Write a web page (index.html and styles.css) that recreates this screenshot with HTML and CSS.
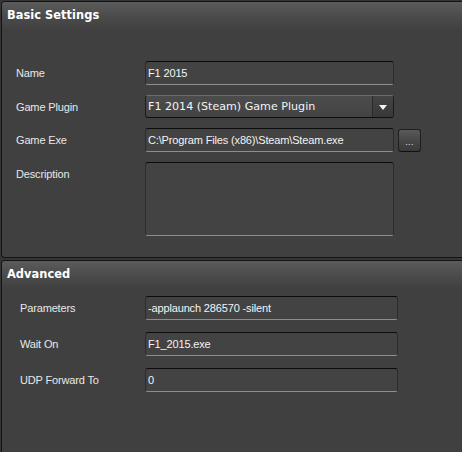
FILE: index.html
```html
<!DOCTYPE html>
<html>
<head>
<meta charset="utf-8">
<link rel="stylesheet" href="styles.css">
</head>
<body>
<div class="page">
  <section class="panel basic">
    <div class="head">Basic Settings</div>
    <div class="body">
      <div class="row">
        <span class="label">Name</span>
        <div class="field">F1 2015</div>
      </div>
      <div class="row">
        <span class="label">Game Plugin</span>
        <div class="select">
          <span class="select-text">F1 2014 (Steam) Game Plugin</span>
          <span class="select-arrow"><span class="tri"></span></span>
        </div>
      </div>
      <div class="row">
        <span class="label">Game Exe</span>
        <div class="field">C:\Program Files (x86)\Steam\Steam.exe</div>
        <div class="browse"><span class="dots">...</span></div>
      </div>
      <div class="row top">
        <span class="label">Description</span>
        <div class="field area"></div>
      </div>
    </div>
  </section>
  <section class="panel advanced">
    <div class="head">Advanced</div>
    <div class="body">
      <div class="row">
        <span class="label">Parameters</span>
        <div class="field">-applaunch 286570 -silent</div>
      </div>
      <div class="row">
        <span class="label">Wait On</span>
        <div class="field">F1_2015.exe</div>
      </div>
      <div class="row">
        <span class="label">UDP Forward To</span>
        <div class="field">0</div>
      </div>
    </div>
  </section>
</div>
</body>
</html>
```

FILE: styles.css
```css
html, body {
  margin: 0;
  padding: 0;
  background: #353535;
  overflow: hidden;
}
.page {
  padding: 1px 0 0 1px;
  display: flex;
  flex-direction: column;
  gap: 2px;
  height: 451px;
}
.panel {
  background: #404040;
  border: 1px solid #141414;
  border-right: none;
  border-radius: 4px 0 0 4px;
  display: flex;
  flex-direction: column;
}
.basic {
  height: 255px;
}
.advanced {
  flex: 1;
  border-bottom: none;
  border-radius: 4px 0 0 0;
}
.head {
  height: 26px;
  line-height: 26px;
  padding-left: 5px;
  background: linear-gradient(#5b5b5b, #4a4a4a 60%, #424242);
  border-radius: 3px 0 0 0;
  color: #ffffff;
  font-family: "DejaVu Sans", Verdana, sans-serif;
  font-weight: bold;
  font-size: 11.4px;
  letter-spacing: 0.05px;
}
.body {
  display: flex;
  flex-direction: column;
}
.basic .body {
  padding: 33px 0 0 14px;
  gap: 10px;
}
.advanced .body {
  padding: 9px 0 0 18px;
  gap: 12px;
}
.row {
  display: flex;
  align-items: center;
}
.row.top {
  align-items: flex-start;
}
.row.top .label {
  padding-top: 6px;
}
.label {
  width: 129px;
  flex: none;
  color: #e8e8e8;
  font-family: "Liberation Sans", Arial, sans-serif;
  font-size: 11px;
  letter-spacing: -0.15px;
}
.advanced .label {
  width: 125px;
}
.field {
  box-sizing: border-box;
  width: 249px;
  height: 24px;
  line-height: 22px;
  padding-left: 2px;
  background: #434343;
  border: 1px solid #2c2c2c;
  border-top-color: #0c0c0c;
  border-bottom-color: #8e8e8e;
  border-radius: 3px;
  color: #f4f4f4;
  font-family: "Liberation Sans", Arial, sans-serif;
  font-size: 11px;
  letter-spacing: -0.15px;
  white-space: nowrap;
  overflow: hidden;
}
.advanced .field {
  width: 253px;
}
.field.area {
  height: 74px;
}
.select {
  box-sizing: border-box;
  width: 249px;
  height: 23px;
  display: flex;
  background: linear-gradient(#4c4c4c, #434343);
  border: 1px solid #1c1c1c;
  border-top-color: #6c6c6c;
  border-bottom-color: #0e0e0e;
  border-radius: 3px;
  overflow: hidden;
}
.select-text {
  flex: 1;
  padding-left: 2px;
  line-height: 21px;
  color: #f4f4f4;
  font-family: "DejaVu Sans", Verdana, sans-serif;
  font-size: 11.1px;
  white-space: nowrap;
}
.select-arrow {
  width: 20px;
  flex: none;
  display: flex;
  align-items: center;
  justify-content: center;
  background: linear-gradient(#444444, #383838);
  border-left: 1px solid #2a2a2a;
}
.tri {
  width: 0;
  height: 0;
  border-left: 4px solid transparent;
  border-right: 4px solid transparent;
  border-top: 5px solid #f2f2f2;
  margin-top: 1px;
}
.browse {
  box-sizing: border-box;
  width: 23px;
  height: 23px;
  margin-left: 4px;
  margin-top: 1px;
  background: linear-gradient(#5a5a5a, #474747 50%, #3a3a3a);
  border: 1px solid #1e1e1e;
  border-bottom-color: #111;
  border-radius: 3px;
  display: flex;
  justify-content: center;
  align-items: flex-end;
}
.dots {
  color: #e6e6e6;
  font-family: "Liberation Sans", Arial, sans-serif;
  font-size: 9px;
  line-height: 9px;
  margin-bottom: 4px;
  letter-spacing: 0.3px;
}
```
